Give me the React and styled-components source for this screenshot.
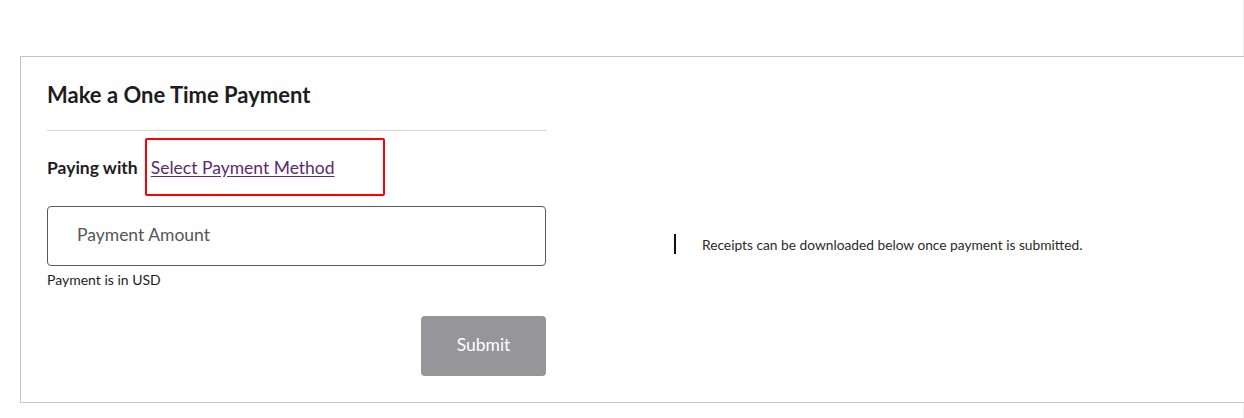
import React from 'react';
import styled, { createGlobalStyle } from 'styled-components';

const GlobalStyle = createGlobalStyle`
  html, body { margin: 0; padding: 0; background: #ffffff; }
  body { font-family: Lato, "Open Sans", sans-serif; color: #1d1d1f; overflow: hidden; }
  * { box-sizing: border-box; }
`;

const Page = styled.div`
  width: 1244px;
  height: 418px;
  padding: 56px 0 0 20px;
  border-right: 1px solid #f0f0f0;
`;

const Card = styled.section`
  width: 1240px;
  height: 347px;
  border: 1px solid #c6c6c6;
  background: #ffffff;
  padding: 20px 0 0 26px;
  display: grid;
  grid-template-columns: 499px 1fr;
  column-gap: 128px;
`;

const FormCol = styled.div`
  display: flex;
  flex-direction: column;
`;

const Title = styled.h2`
  margin: 0;
  font-size: 22px;
  font-weight: 700;
  line-height: 36px;
  color: #1d1d1f;
  padding-bottom: 17px;
  border-bottom: 1px solid #d4d4d4;
`;

const PayingRow = styled.div`
  display: flex;
  align-items: center;
  margin-top: 7px;
  gap: 7px;
`;

const PayingLabel = styled.span`
  font-size: 17.5px;
  font-weight: 700;
  color: #1d1d1f;
`;

const Highlight = styled.div`
  width: 240px;
  height: 58px;
  border: 2px solid #ff0000;
  border-radius: 2px;
  display: flex;
  align-items: center;
  padding-left: 4px;
`;

const MethodLink = styled.a`
  font-size: 17.5px;
  color: #5b2a6f;
  text-decoration: underline;
  text-underline-offset: 2px;
  cursor: pointer;
`;

const AmountInput = styled.input`
  margin-top: 10px;
  width: 100%;
  height: 60px;
  border: 1px solid #5a5a5a;
  border-radius: 4px;
  padding: 0 29px 3px;
  font-family: Lato, "Open Sans", sans-serif;
  font-size: 17.5px;
  color: #1d1d1f;
  outline: none;
  &::placeholder { color: #555555; opacity: 1; }
`;

const Hint = styled.p`
  margin: 5px 0 0;
  font-size: 14px;
  color: #1d1d1f;
`;

const Actions = styled.div`
  display: flex;
  justify-content: flex-end;
  margin-top: 28px;
`;

const SubmitBtn = styled.button`
  width: 125px;
  height: 60px;
  border: none;
  border-radius: 4px;
  padding: 0 0 4px;
  background: #96969a;
  color: #ffffff;
  font-family: Lato, "Open Sans", sans-serif;
  font-size: 17.5px;
  cursor: not-allowed;
`;

const InfoCol = styled.div`
  display: flex;
  align-items: center;
  align-self: start;
  margin-top: 157px;
  gap: 26px;
`;

const Bar = styled.span`
  display: block;
  width: 2px;
  height: 20px;
  background: #111111;
`;

const InfoText = styled.span`
  font-size: 13.75px;
  color: #2b2b2b;
`;

export default function App() {
  return (
    <>
      <GlobalStyle />
      <Page>
        <Card>
          <FormCol>
            <Title>Make a One Time Payment</Title>
            <PayingRow>
              <PayingLabel>Paying with</PayingLabel>
              <Highlight>
                <MethodLink>Select Payment Method</MethodLink>
              </Highlight>
            </PayingRow>
            <AmountInput placeholder="Payment Amount" />
            <Hint>Payment is in USD</Hint>
            <Actions>
              <SubmitBtn disabled>Submit</SubmitBtn>
            </Actions>
          </FormCol>
          <InfoCol>
            <Bar />
            <InfoText>Receipts can be downloaded below once payment is submitted.</InfoText>
          </InfoCol>
        </Card>
      </Page>
    </>
  );
}
